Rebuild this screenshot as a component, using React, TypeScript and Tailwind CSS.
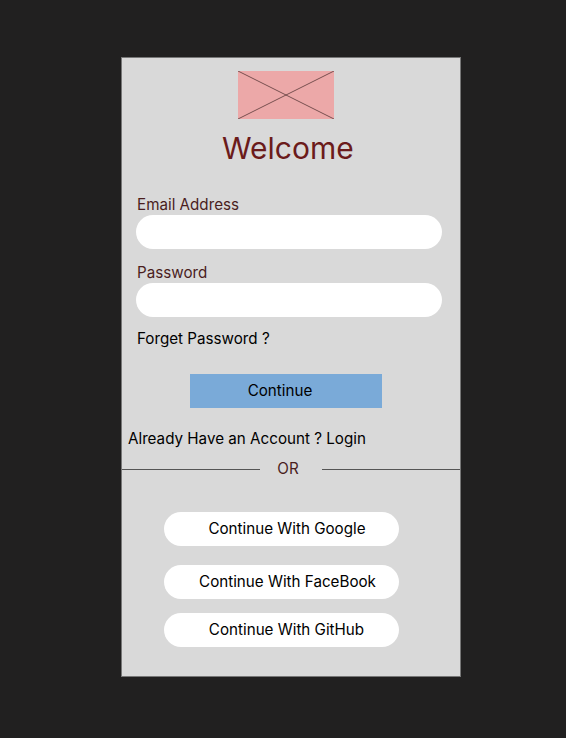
export default function App() {
  const font = { fontFamily: "Inter, 'Noto Sans', sans-serif" };
  return (
    <div className="min-h-[738px] w-full bg-[#212020] pt-[57px] pl-[121px]" style={font}>
      <div className="relative flex h-[620px] w-[340px] flex-col border border-[#777777] bg-[#d9d9d9]">
        <div className="ml-[116px] mt-[13px] h-[48px] w-[96px] bg-[#eca8a8]">
          <svg width="96" height="48" viewBox="0 0 96 48" className="block">
            <line x1="0" y1="0" x2="96" y2="48" stroke="#5a3a3a" strokeWidth="0.8" />
            <line x1="96" y1="0" x2="0" y2="48" stroke="#5a3a3a" strokeWidth="0.8" />
          </svg>
        </div>
        <h1 className="mt-[11px] ml-[100px] text-[30px] leading-[36px] text-[#6b1b1b]">Welcome</h1>
        <div className="mt-[30px] ml-[15px] text-[15.2px] leading-[18px] text-[#4a1e1e]">Email Address</div>
        <div className="mt-[1px] ml-[14px] h-[34px] w-[306px] rounded-full bg-white" />
        <div className="mt-[15px] ml-[15px] text-[15.2px] leading-[18px] text-[#4a1e1e]">Password</div>
        <div className="mt-[1px] ml-[14px] h-[34px] w-[306px] rounded-full bg-white" />
        <div className="mt-[13px] ml-[15px] text-[15.2px] leading-[18px] text-black">Forget Password ?</div>
        <div className="mt-[26px] ml-[68px] flex h-[34px] w-[192px] items-center justify-center bg-[#7aaad8] pr-[12px] text-[15.2px] text-black">
          Continue
        </div>
        <div className="mt-[22px] ml-[6px] text-[15.2px] leading-[18px] text-black">Already Have an Account ? Login</div>
        <div className="mt-[12px] flex items-center">
          <div className="h-px w-[138px] bg-[#555555]" />
          <div className="flex w-[62px] justify-center pr-[6px] text-[15.2px] leading-[18px] text-[#4a1e1e]">OR</div>
          <div className="h-px flex-1 bg-[#555555]" />
        </div>
        <div className="mt-[34px] ml-[42px] flex flex-col">
          <div className="flex h-[34px] w-[235px] items-center justify-center rounded-full bg-white pl-[11px] text-[15.2px] text-black">
            Continue With Google
          </div>
          <div className="mt-[19px] flex h-[34px] w-[235px] items-center justify-center rounded-full bg-white pl-[12px] text-[15.2px] text-black">
            Continue With FaceBook
          </div>
          <div className="mt-[14px] flex h-[34px] w-[235px] items-center justify-center rounded-full bg-white pl-[10px] text-[15.2px] text-black">
            Continue With GitHub
          </div>
        </div>
      </div>
    </div>
  );
}
